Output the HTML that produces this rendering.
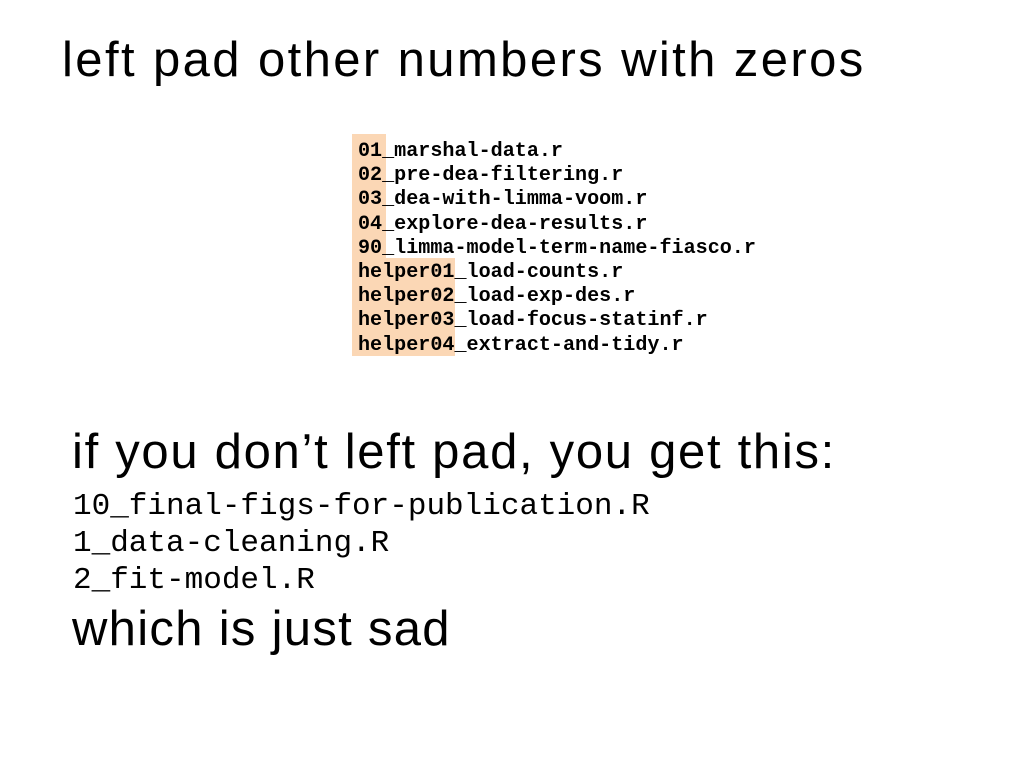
<!DOCTYPE html>
<html><head><meta charset="utf-8"><style>
body{margin:0;width:1024px;height:768px;background:#fff;position:relative;overflow:hidden;font-family:"Liberation Sans",sans-serif;color:#000}
.t{position:absolute;white-space:nowrap;line-height:1}
.m{font-family:"Liberation Mono",monospace;font-weight:bold}
.hl{position:absolute;background:#fbd7b5}
</style></head><body>
<div class="t" style="left:62px;top:36px;font-size:49px;letter-spacing:2.4px">left pad other numbers with zeros</div>
<div class="hl" style="left:352px;top:134px;width:34px;height:124px"></div>
<div class="hl" style="left:352px;top:258px;width:103px;height:98px"></div>
<div class="t m" style="left:358px;top:140px;font-size:20.1px;line-height:24.2px">01_marshal-data.r<br>02_pre-dea-filtering.r<br>03_dea-with-limma-voom.r<br>04_explore-dea-results.r<br>90_limma-model-term-name-fiasco.r<br>helper01_load-counts.r<br>helper02_load-exp-des.r<br>helper03_load-focus-statinf.r<br>helper04_extract-and-tidy.r</div>
<div class="t" style="left:72px;top:428px;font-size:49px;letter-spacing:1.7px">if you don’t left pad, you get this:</div>
<div class="t m" style="left:73px;top:488px;font-size:31px;line-height:37px;font-weight:normal">10_final-figs-for-publication.R<br>1_data-cleaning.R<br>2_fit-model.R</div>
<div class="t" style="left:72px;top:605px;font-size:49px;letter-spacing:1.3px">which is just sad</div>
</body></html>
